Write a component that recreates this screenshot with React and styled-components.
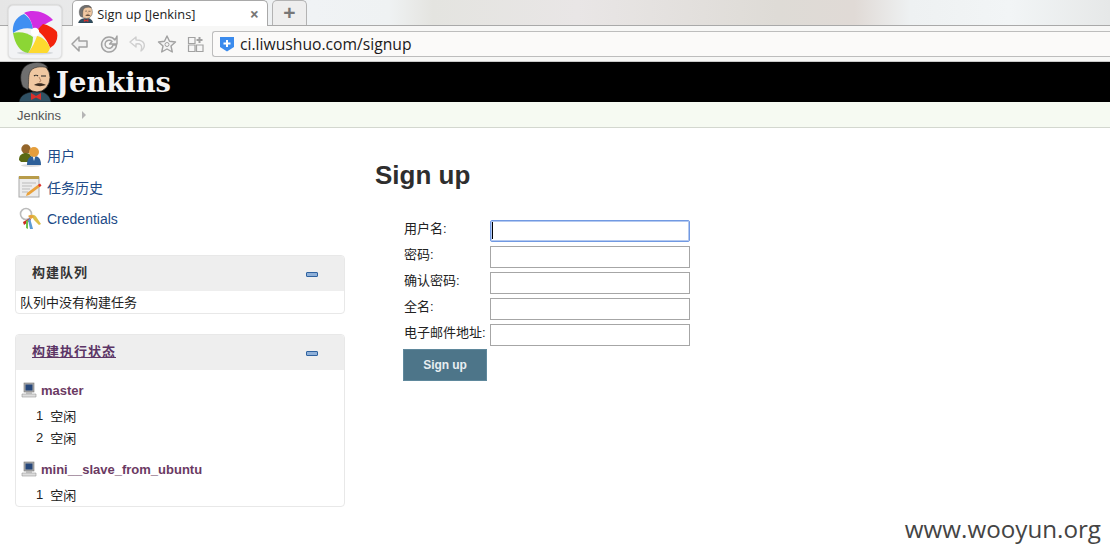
import styled, { createGlobalStyle } from 'styled-components';

const GlobalStyle = createGlobalStyle`
  html, body {
    margin: 0;
    padding: 0;
    background: #fff;
    overflow: hidden;
  }
  body {
    font-family: "Liberation Sans", Arial, "Noto Sans CJK SC", sans-serif;
    font-size: 13px;
    color: #222;
  }
`;

const cjk = `"Liberation Sans", "Noto Sans CJK SC", sans-serif`;

const Page = styled.div`
  position: relative;
  width: 1110px;
  height: 558px;
  overflow: hidden;
`;

const Chrome = styled.div`
  height: 61px;
  border-bottom: 1px solid #c9c9c9;
  background: #f6f6f6;
`;

const TabStrip = styled.div`
  height: 26px;
  box-sizing: border-box;
  padding-left: 72px;
  display: flex;
  gap: 4px;
  border-bottom: 1px solid #a9a9a9;
  background: linear-gradient(90deg, #e6e6e6 0, #f0f3f5 28%, #eff2f3 35%, #e4e4e0 39%, #e9e6e6 52%, #dedbd6 70%, #e0dad6 77%, #eef1f2 82%, #f2f5f6 91%, #e6e8e8 100%);
`;

const Tab = styled.div`
  width: 196px;
  height: 26px;
  box-sizing: border-box;
  padding: 0 8px 0 5px;
  display: flex;
  align-items: center;
  gap: 4px;
  background: #fff;
  border: 1px solid #a9a9a9;
  border-bottom: none;
  border-radius: 5px 5px 0 0;
  font-family: "Open Sans", sans-serif;
  font-size: 12.8px;
  color: #222;
`;

const TabTitle = styled.span`
  flex: 1;
  white-space: nowrap;
`;

const TabClose = styled.span`
  font-size: 16px;
  font-weight: 700;
  color: #777;
  line-height: 1;
`;

const NewTab = styled.div`
  width: 35px;
  height: 25px;
  box-sizing: border-box;
  display: flex;
  align-items: center;
  justify-content: center;
  background: #eee;
  border: 1px solid #b3b3b3;
  border-bottom: none;
  border-radius: 5px 5px 0 0;
  color: #777;
  font-size: 21px;
  font-weight: 700;
`;

const Toolbar = styled.div`
  height: 35px;
  box-sizing: border-box;
  padding: 5px 0 4px 70px;
  display: flex;
  align-items: center;
  background: #f7f7f6;
`;

const ToolIcons = styled.div`
  width: 142px;
  display: flex;
  gap: 9px;
`;

const AddressBar = styled.div`
  flex: 1;
  height: 26px;
  box-sizing: border-box;
  padding-left: 7px;
  display: flex;
  align-items: center;
  gap: 6px;
  background: #fbfaf9;
  border: 1px solid #bdbdbd;
  border-right: none;
  border-radius: 3px 0 0 3px;
  font-family: "Open Sans", sans-serif;
  font-size: 15.7px;
  color: #1b1b1b;
`;

const BrowserLogo = styled.div`
  position: absolute;
  left: 8px;
  top: 5px;
  width: 54px;
  height: 54px;
  box-sizing: border-box;
  background: #f2f3f5;
  border: 1px solid #e3e3e3;
  border-radius: 5px;
  box-shadow: 0 0 2px rgba(0, 0, 0, 0.2);
`;

const Header = styled.header`
  height: 40px;
  box-sizing: border-box;
  padding-left: 18px;
  display: flex;
  align-items: flex-end;
  gap: 4px;
  background: #000;
  overflow: hidden;
`;

const HeaderTitle = styled.span`
  align-self: center;
  font-family: "DejaVu Serif", Georgia, serif;
  font-size: 27.4px;
  font-weight: 700;
  line-height: 36px;
  color: #f4f4f4;
`;

const Breadcrumbs = styled.nav`
  height: 26px;
  box-sizing: border-box;
  padding: 1px 0 0 17px;
  display: flex;
  align-items: center;
  gap: 21px;
  background: #f6faf2;
  border-bottom: 1px solid #d3d7cf;
  color: #555;
  font-size: 13px;
`;

const Caret = styled.span`
  width: 0;
  height: 0;
  border-left: 4px solid #b5b5b5;
  border-top: 4px solid transparent;
  border-bottom: 4px solid transparent;
`;

const Layout = styled.div`
  display: flex;
`;

const Side = styled.aside`
  width: 375px;
  flex: none;
  box-sizing: border-box;
  padding: 13px 30px 0 15px;
`;

const Tasks = styled.div`
  display: flex;
  flex-direction: column;
  gap: 4px;
  margin-bottom: 22px;
`;

const Task = styled.a`
  height: 28px;
  padding-left: 3px;
  display: flex;
  align-items: center;
  gap: 5px;
  color: #204a87;
  font-size: 14px;
  font-family: ${cjk};
`;

const Pane = styled.section`
  margin-bottom: 20px;
  border: 1px solid #e8e8e8;
  border-radius: 4px;
  overflow: hidden;
  height: ${(p) => p.$height}px;
  box-sizing: border-box;
`;

const PaneHead = styled.div`
  height: 35px;
  box-sizing: border-box;
  padding: 0 26px 4px 16px;
  display: flex;
  align-items: center;
  justify-content: space-between;
  background: #eee;
  font-family: ${cjk};
  font-size: 13px;
  font-weight: 700;
  letter-spacing: 1px;
  color: ${(p) => (p.$link ? '#5c3566' : '#333')};
  text-decoration: ${(p) => (p.$link ? 'underline' : 'none')};
`;

const Collapse = styled.span`
  width: 12px;
  height: 5px;
  margin-top: 5px;
  box-sizing: border-box;
  background: #8fb0d8;
  border: 1px solid #2f629f;
  border-radius: 1px;
`;

const PaneText = styled.div`
  padding: 4px 4px;
  font-family: ${cjk};
  font-size: 13px;
  line-height: 16px;
  color: #222;
`;

const Executors = styled.div`
  padding: 10px 0 0 5px;
`;

const Node = styled.div`
  height: 20px;
  display: flex;
  align-items: center;
  gap: 4px;
  font-size: 13px;
  font-weight: 700;
  color: #6b3a63;
`;

const ExecutorList = styled.div`
  padding: 4px 0 11px 15px;
`;

const Executor = styled.div`
  height: 22px;
  display: flex;
  align-items: center;
  gap: 7px;
  font-family: ${cjk};
  font-size: 13px;
  color: #222;
`;

const Main = styled.main`
  flex: 1;
  padding-top: 31px;
`;

const Title = styled.h1`
  margin: 0 0 29px;
  font-size: 26px;
  line-height: 32px;
  font-weight: 700;
  color: #2e2e2e;
`;

const SignupForm = styled.form`
  padding-left: 28px;
`;

const FormGrid = styled.div`
  display: grid;
  grid-template-columns: 87px 200px;
  grid-auto-rows: 22px;
  row-gap: 4px;
  margin-bottom: 3px;
`;

const FieldLabel = styled.label`
  padding: 1px 0 0 1px;
  font-family: ${cjk};
  font-size: 13px;
  line-height: 15px;
  color: #222;
  white-space: nowrap;
`;

const Field = styled.input`
  width: 200px;
  height: 22px;
  box-sizing: border-box;
  padding: 1px 2px;
  margin: 0;
  background: #fff;
  border: 1px solid ${(p) => (p.$focused ? '#7199e2' : '#a6a6a6')};
  border-radius: ${(p) => (p.$focused ? '2px' : '0')};
  box-shadow: ${(p) => (p.$focused ? 'inset 0 0 0 1px #b4c9f0' : 'none')};
  outline: none;
`;

const TextCursor = styled.span`
  position: absolute;
  left: 492px;
  top: 222px;
  width: 1px;
  height: 17px;
  background: #000;
`;

const SubmitButton = styled.button`
  display: block;
  width: 84px;
  height: 32px;
  padding: 0;
  background: #4d7589;
  border: 1px solid #5f889c;
  color: #e8eef1;
  font-family: "Liberation Sans", Arial, sans-serif;
  font-size: 12px;
  font-weight: 700;
  letter-spacing: -0.1px;
`;

const Watermark = styled.div`
  position: absolute;
  right: 9px;
  top: 514px;
  font-family: "Open Sans", sans-serif;
  font-size: 24.2px;
  line-height: 30px;
  color: #444;
`;

const Pinwheel = () => (
  <svg width="52" height="52" viewBox="9 6 52 52">
    <ellipse cx="35" cy="53" rx="18" ry="1.6" fill="#d5d8dc" />
    <path d="M13 33 C12 24 16 17 24 14 C29 17 32 22 33 29 C26 27 19 29 13 33 Z" fill="#3f8ff2" />
    <path d="M24 13 C32 9 45 11 53 20 C47 23 41 26 37 30 L33 29 C32 22 29 16 24 13 Z" fill="#d22de2" />
    <path d="M37 30 C40 27 42 25 43 24 C48 25 54 28 57 32 C58 37 57 41 54 45 L50 48 C48 41 43 35 37 30 Z" fill="#f3230c" />
    <path d="M37 36 C43 37 48 42 50 48 C49 51 48 52 47 53 L28 53 C32 48 35 42 37 36 Z" fill="#fdd92e" />
    <path d="M13 33 C20 31 28 33 33 37 C33 43 31 49 28 53 C20 52 15 44 13 33 Z" fill="#8cd635" />
    <circle cx="35" cy="32" r="4.2" fill="#fff" />
  </svg>
);

const JenkinsHead = ({ size = 40 }) => (
  <svg width={size * 0.85} height={size} viewBox="0 0 34 40">
    <path d="M1 40 C2 33 8 31 13 30 L25 30 C29 32 32 34 33 40 Z" fill="#2f5063" stroke="#111" strokeWidth="0.6" />
    <ellipse cx="19" cy="15.5" rx="13" ry="14.5" fill="#f0c8a2" stroke="#222" strokeWidth="0.8" />
    <path d="M5 25 C1 18 2 6 10 2.5 C17 -1 27 0 30 6 C23 3.5 14 5 12 10 C10 14 11 20 10 28 Z" fill="#6f6f6f" stroke="#222" strokeWidth="0.6" />
    <path d="M16 23 C19 20.5 24 20.5 28 23 C24 24.5 20 24.5 16 23 Z" fill="#3c2d22" />
    <path d="M16 14 C17 13 19 13 20 14 M23 14 H28" stroke="#222" strokeWidth="1.1" fill="none" />
    <path d="M21 15 L23 19 L21 20" stroke="#a8795a" strokeWidth="0.8" fill="none" />
    <path d="M13 31 L18 34 L23 31 L23 38 L18 35.5 L13 38 Z" fill="#d8302b" />
  </svg>
);

const UsersIcon = () => (
  <svg width="24" height="24" viewBox="0 0 24 24">
    <ellipse cx="13" cy="22.5" rx="10" ry="1.5" fill="#ddd" />
    <circle cx="8" cy="6" r="4.7" fill="#94662b" />
    <path d="M1 17 C1 12 4 10 8 10 C12 10 14 13 14 19 L3 19 Z" fill="#5b6a14" />
    <path d="M9 22 C9 15 12 13 16 13 C20 13 23 15 23 22 Z" fill="#2e6099" />
    <path d="M14.5 13 L16 18 L17.5 13 Z" fill="#eee" />
    <circle cx="16" cy="9" r="5" fill="#e59e3c" />
  </svg>
);

const NotepadIcon = () => (
  <svg width="24" height="24" viewBox="0 0 24 24">
    <rect x="1" y="2" width="20" height="20" fill="#ececec" stroke="#aaa" />
    <rect x="1" y="1" width="20" height="3" fill="#b89c4a" />
    <path d="M4 8 H18 M4 11 H14 M4 14 H12 M4 17 H10" stroke="#bbb" />
    <path d="M9 18 L21 9 L23 11 L11 20 L8 21 Z" fill="#e9a23b" />
    <path d="M20 10 L22 8.5 L23.5 10.5 L21.5 12 Z" fill="#d33" />
  </svg>
);

const KeysIcon = () => (
  <svg width="24" height="24" viewBox="0 0 24 24">
    <circle cx="8" cy="7" r="5.5" fill="none" stroke="#bbb" strokeWidth="1.6" />
    <path d="M13 8 C16 7 18 9 19 11 L23 17 L21 18 L16 13 Z" fill="#dcc04a" />
    <path d="M5 15 L12 11 L13 13 L6 18 Z" fill="#cc2a1e" />
    <path d="M12 11 L15 22 L12 22 L10 13 Z" fill="#5b9bd5" />
    <path d="M10 13 L10 22 L8 21 L8 14 Z" fill="#6fc04a" />
    <path d="M10 9 C12 7 15 8 16 10 L13 12 Z" fill="#e7a13a" />
  </svg>
);

const ComputerIcon = () => (
  <svg width="16" height="16" viewBox="0 0 16 16">
    <rect x="3" y="1" width="10" height="9" fill="#aaa" stroke="#777" strokeWidth="0.6" />
    <rect x="4.5" y="2.5" width="7" height="6" fill="#26477a" />
    <path d="M1 12 H15 V15 H1 Z" fill="#ddd" stroke="#999" strokeWidth="0.6" />
    <path d="M5 10 H11 V12 H5 Z" fill="#bbb" />
  </svg>
);

const BackIcon = () => (
  <svg width="20" height="20" viewBox="0 0 20 20">
    <path d="M9 3 L2 10 L9 17 V13 H17 V7 H9 Z" fill="#f2f2f2" stroke="#a2a2a2" strokeWidth="1.5" strokeLinejoin="round" />
  </svg>
);

const ReloadIcon = () => (
  <svg width="20" height="20" viewBox="0 0 20 20">
    <path d="M16 6 A7.5 7.5 0 1 0 17.5 11 H14 A4 4 0 1 1 13 7.5 L10.5 10 H18 V2 Z" fill="#f2f2f2" stroke="#a2a2a2" strokeWidth="1.4" strokeLinejoin="round" />
  </svg>
);

const UndoIcon = () => (
  <svg width="20" height="20" viewBox="0 0 20 20">
    <path d="M8 3 L2 8 L8 13 V10 C12 9 15 11 13 17 C18 13 18 6 8 6 Z" fill="#f8f8f8" stroke="#cfcfcf" strokeWidth="1.4" strokeLinejoin="round" />
  </svg>
);

const StarIcon = () => (
  <svg width="20" height="20" viewBox="0 0 20 20">
    <path d="M10 2 L12.5 7.3 L18.5 8 L14 12 L15.3 18 L10 15 L4.7 18 L6 12 L1.5 8 L7.5 7.3 Z" fill="#f4f4f4" stroke="#a2a2a2" strokeWidth="1.4" strokeLinejoin="round" />
    <circle cx="10" cy="10.5" r="2" fill="none" stroke="#a2a2a2" />
  </svg>
);

const AppsIcon = () => (
  <svg width="20" height="20" viewBox="0 0 20 20">
    <path d="M2.5 3.5 H9 V9.5 H2.5 Z M2.5 11 H9 V17.5 H2.5 Z M10.5 11 H17 V17.5 H10.5 Z" fill="#f6f6f6" stroke="#a2a2a2" strokeWidth="1.2" />
    <path d="M13.5 3 V9 M10.5 6 H16.5" stroke="#a2a2a2" strokeWidth="2" />
  </svg>
);

const ShieldIcon = () => (
  <svg width="14" height="16" viewBox="0 0 14 16">
    <path d="M0 1 H14 V11 L7 15.5 L0 11 Z" fill="#3b8bed" />
    <path d="M7 4 V11 M3.5 7.5 H10.5" stroke="#fff" strokeWidth="2" />
  </svg>
);

const fields = [
  { label: '用户名', focused: true },
  { label: '密码', type: 'password' },
  { label: '确认密码', type: 'password' },
  { label: '全名' },
  { label: '电子邮件地址' },
];

const nodes = [
  { name: 'master', executors: [1, 2] },
  { name: 'mini__slave_from_ubuntu', executors: [1] },
];

function FormField({ label, type = 'text', focused }) {
  return (
    <>
      <FieldLabel>{label}:</FieldLabel>
      <Field type={type} $focused={focused} />
    </>
  );
}

export default function App() {
  return (
    <Page>
      <GlobalStyle />
      <Chrome>
        <TabStrip>
          <Tab>
            <JenkinsHead size={18} />
            <TabTitle>Sign up [Jenkins]</TabTitle>
            <TabClose>×</TabClose>
          </Tab>
          <NewTab>+</NewTab>
        </TabStrip>
        <Toolbar>
          <ToolIcons>
            <BackIcon />
            <ReloadIcon />
            <UndoIcon />
            <StarIcon />
            <AppsIcon />
          </ToolIcons>
          <AddressBar>
            <ShieldIcon />
            ci.liwushuo.com/signup
          </AddressBar>
        </Toolbar>
      </Chrome>
      <BrowserLogo>
        <Pinwheel />
      </BrowserLogo>

      <Header>
        <JenkinsHead size={40} />
        <HeaderTitle>Jenkins</HeaderTitle>
      </Header>
      <Breadcrumbs>
        Jenkins
        <Caret />
      </Breadcrumbs>

      <Layout>
        <Side>
          <Tasks>
            <Task><UsersIcon />用户</Task>
            <Task><NotepadIcon />任务历史</Task>
            <Task><KeysIcon />Credentials</Task>
          </Tasks>
          <Pane $height={59}>
            <PaneHead>
              构建队列
              <Collapse />
            </PaneHead>
            <PaneText>队列中没有构建任务</PaneText>
          </Pane>
          <Pane $height={173}>
            <PaneHead $link>
              构建执行状态
              <Collapse />
            </PaneHead>
            <Executors>
              {nodes.map((node) => (
                <div key={node.name}>
                  <Node>
                    <ComputerIcon />
                    {node.name}
                  </Node>
                  <ExecutorList>
                    {node.executors.map((n) => (
                      <Executor key={n}>
                        <span>{n}</span>
                        <span>空闲</span>
                      </Executor>
                    ))}
                  </ExecutorList>
                </div>
              ))}
            </Executors>
          </Pane>
        </Side>

        <Main>
          <Title>Sign up</Title>
          <SignupForm>
            <FormGrid>
              {fields.map((f) => (
                <FormField key={f.label} {...f} />
              ))}
            </FormGrid>
            <SubmitButton type="button">Sign up</SubmitButton>
          </SignupForm>
        </Main>
      </Layout>

      <TextCursor />
      <Watermark>www.wooyun.org</Watermark>
    </Page>
  );
}
